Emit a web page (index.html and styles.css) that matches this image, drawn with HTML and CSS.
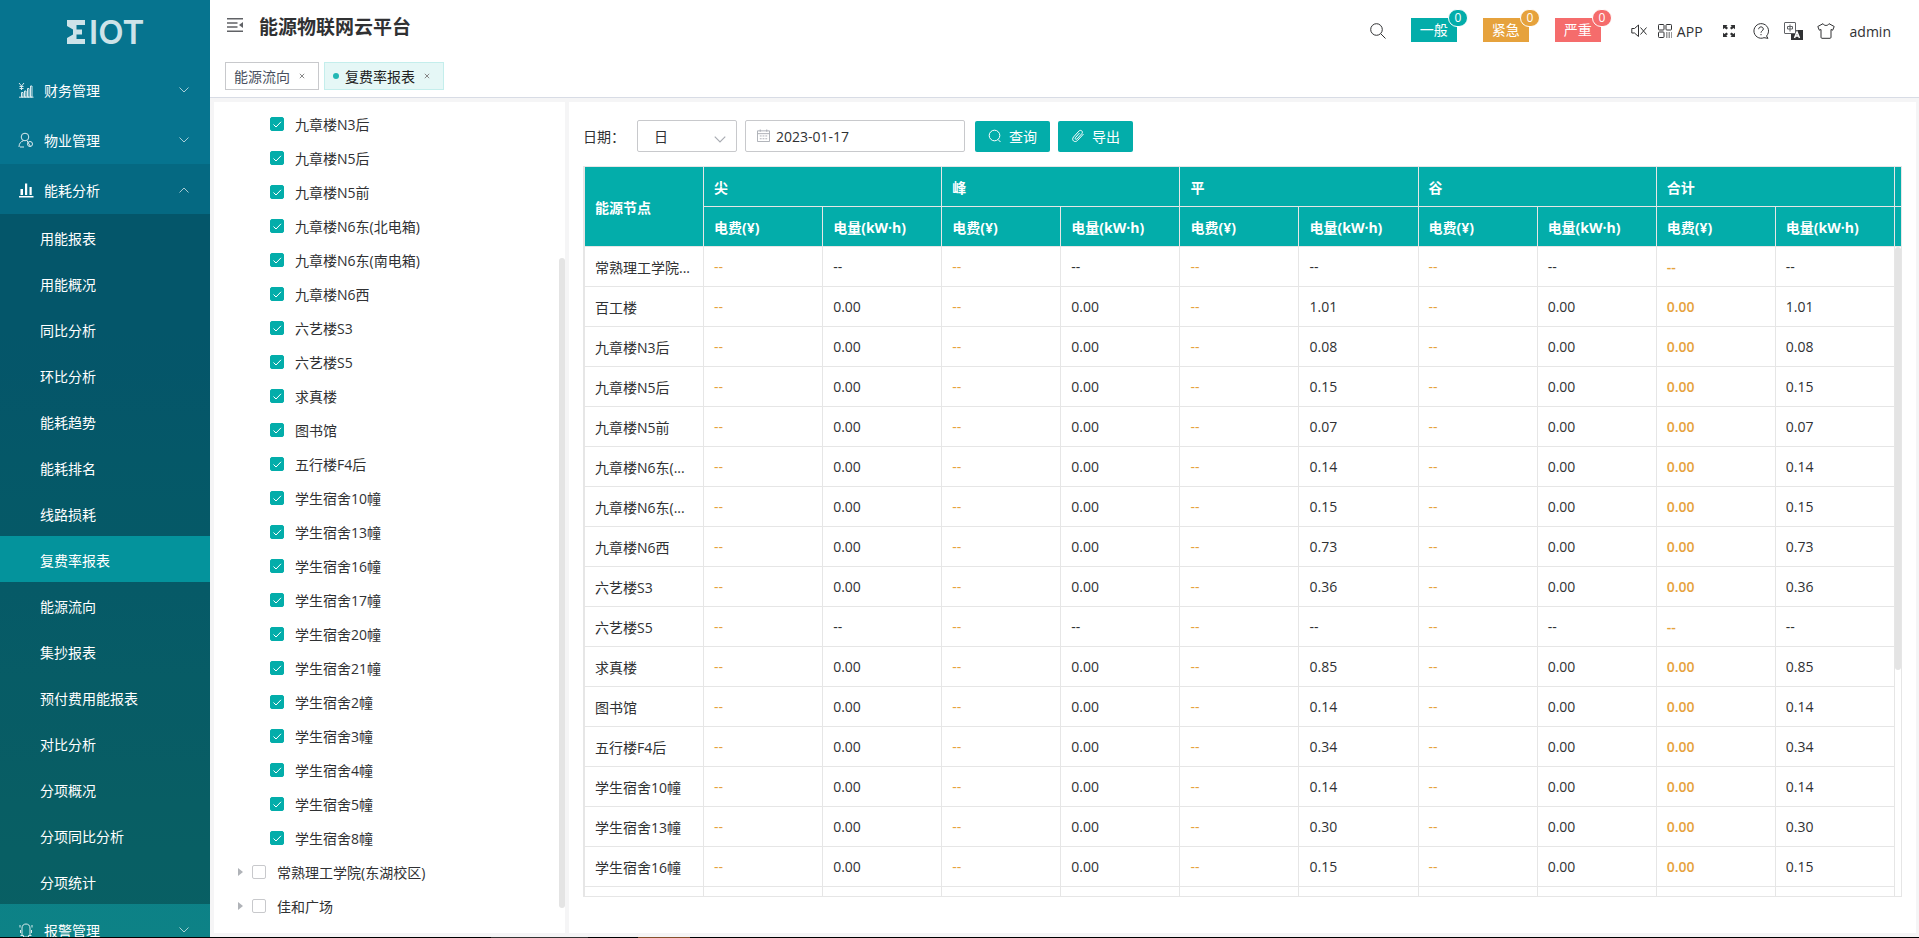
FILE: index.html
```html
<!DOCTYPE html>
<html lang="zh-CN">
<head>
<meta charset="utf-8">
<title>能源物联网云平台</title>
<link rel="stylesheet" href="styles.css">
</head>
<body>
<div class="app">
  <nav class="sidebar">
    <div class="logo">
      <svg class="logo-mark" viewBox="0 0 18 24"><path d="M0 0H18V5H9.500V9.500H15V14.500H9.500V19H18V24H0V18L6 14.500V9.500L0 6Z"/></svg>
      <span>IOT</span>
    </div>
    <button class="menu-item">
      <svg class="menu-icon" viewBox="0 0 16 16"><path d="M1 1l2.500 3L6 1M3.500 4v4M1.500 4.500h4M1.500 6.500h4M1 15.200h14.500M3.500 10.500h1.500V15H3.500zM6.500 9H8v6H6.500zM9.500 6.500H11V15H9.500zM12.500 4H14v11h-1.500z"/></svg>
      <span>财务管理</span>
      <svg class="menu-arrow" viewBox="0 0 10 6"><path d="M.5.5L5 5 9.500.5"/></svg>
    </button>
    <button class="menu-item">
      <svg class="menu-icon" viewBox="0 0 16 16"><circle cx="7" cy="5" r="3.800"/><path d="M1 15c0-3.500 1.800-5.500 4.500-6.300M2 15h4M9 8.700l3.500 5.800"/><circle cx="12" cy="12" r="2.500"/></svg>
      <span>物业管理</span>
      <svg class="menu-arrow" viewBox="0 0 10 6"><path d="M.5.5L5 5 9.500.5"/></svg>
    </button>
    <button class="menu-item is-open">
      <svg class="menu-icon is-solid" viewBox="0 0 16 16"><path d="M1 14h14.500v1.500H1zM2.500 7H5v6H2.500zM7 1.500h2.200V13H7zM11.500 5h2.200v8h-2.200z"/></svg>
      <span>能耗分析</span>
      <svg class="menu-arrow" viewBox="0 0 10 6"><path d="M.5 5.500L5 1l4.500 4.500"/></svg>
    </button>
    <div class="submenu" id="submenu"></div>
    <button class="menu-item">
      <svg class="menu-icon" viewBox="0 0 16 16"><path d="M4 13V6c0-2.500 1.700-4 4-4s4 1.500 4 4v7M2.500 13.500h3v1.500h5v-1.500h3M2 3v2.500M14 3v2.500M2.500 8v3M13.500 8v3"/></svg>
      <span>报警管理</span>
      <svg class="menu-arrow" viewBox="0 0 10 6"><path d="M.5.5L5 5 9.500.5"/></svg>
    </button>
  </nav>

  <div class="main">
    <header class="header">
      <div class="topbar">
        <div class="brand">
          <svg class="fold" viewBox="0 0 16 14"><path d="M0 .8h16M0 5h10.500M0 9h10.500M0 13.200h16"/><path class="fill" d="M16 4v6l-4-3z"/></svg>
          <h1>能源物联网云平台</h1>
        </div>
        <div class="tools">
          <svg class="i-search" viewBox="0 0 16 16"><circle cx="6.500" cy="6.500" r="5.800"/><path d="M10.800 10.800l4.700 4.700"/></svg>
          <div class="alarms">
            <button class="alarm normal">一般<span class="count">0</span></button>
            <button class="alarm urgent">紧急<span class="count">0</span></button>
            <button class="alarm severe">严重<span class="count">0</span></button>
          </div>
          <div class="shortcuts">
            <svg class="i-16" viewBox="0 0 16 16"><path d="M.8 5.500h2.700L7.500 2v11.500L3.500 10H.8zM9.500 4.500l6 7M15.500 4.500l-6 7"/></svg>
            <a class="app-link" href="#"><svg class="i-14" viewBox="0 0 14 14"><rect x=".5" y=".5" width="5.500" height="5.500" rx=".8"/><rect x="8" y=".5" width="5.500" height="5.500" rx=".8"/><rect x=".5" y="8" width="5.500" height="5.500" rx=".8"/><path d="M8 9h1.500M10.500 9H12M13 9h1M8 11h1.500M10.500 11H12M13 11h1M8 13h1.500M10.500 13H12M13 13h1"/></svg>APP</a>
          </div>
          <svg class="i-full" viewBox="0 0 12 12"><path d="M0 0h4.500L3.300 1.200 5 3 3.500 4.500 1.500 3 0 4.300zM12 0v4.300L10.500 3l-2 1.500L7 3l1.700-1.800L7.500 0zM0 12V7.700L1.500 9l2-1.500L5 9l-1.700 1.800L4.500 12zM12 12H7.500l1.200-1.200L7 9l1.500-1.500 2 1.500L12 7.700z"/></svg>
          <svg class="i-help" viewBox="0 0 16 16"><path d="M13.500 13A7.300 7.300 0 1 0 11 14.700l4 .6zM5.700 6.200c0-1.500 1-2.300 2.300-2.300s2.300.8 2.300 2.100C10.300 7.800 8 7.800 8 9.700M8 11v1.200"/></svg>
          <svg class="i-lang" viewBox="0 0 19 18"><path class="block" d="M7 8h12v10H7z"/><rect class="line" x=".5" y=".5" width="11" height="11" rx=".5"/><path class="line thin" d="M3.500 4.500h5v2.500h-5zM6 2.500V9.500"/><path class="mark" d="M10.500 16L13 10l2.500 6M11.500 14h3"/></svg>
          <svg class="i-shirt" viewBox="0 0 18 16"><path d="M6 .7L.8 3.500 2.300 7.200 4 6.500v7.800c0 .6.400 1 1 1h8c.6 0 1-.4 1-1V6.500l1.700.7 1.500-3.700L12 .7C11 3 7 3 6 .7z"/></svg>
          <a class="user" href="#">admin</a>
        </div>
      </div>
      <div class="tabs">
        <a class="tab" href="#"><span>能源流向</span><svg viewBox="0 0 6 6"><path d="M.8.8l4.400 4.400M5.200.8L.8 5.200"/></svg></a>
        <a class="tab is-active" href="#"><i class="dot"></i><span>复费率报表</span><svg viewBox="0 0 6 6"><path d="M.8.8l4.400 4.400M5.200.8L.8 5.200"/></svg></a>
      </div>
    </header>

    <div class="content">
      <aside class="tree">
        <div id="tree"></div>
        <div class="tree-bar"></div>
      </aside>
      <section class="report">
        <form class="filters">
          <label for="period">日期：</label>
          <div class="select-box">
            <select id="period"><option>日</option></select>
            <svg viewBox="0 0 10 6"><path d="M.5.5L5 5 9.500.5"/></svg>
          </div>
          <div class="date-box">
            <svg viewBox="0 0 14 14"><path d="M.5 2h13v11.500H.5zM.5 5h13M3.500.5V3M10.500.5V3M3 7.500h2M6 7.500h2M9 7.500h2M3 10.500h2M6 10.500h2M9 10.500h2"/></svg>
            <input type="text" aria-label="选择日期" value="2023-01-17">
          </div>
          <button class="btn" type="button"><svg viewBox="0 0 14 14"><circle cx="6.500" cy="6.500" r="5.300"/><path d="M10 10.500l2.500 2.500"/></svg>查询</button>
          <button class="btn" type="button"><svg viewBox="0 0 14 14"><path d="M8.500 4L4.500 8.500c-1 1.300.5 2.500 1.600 1.400l4.700-5.200c1.800-2.200-1-4.500-2.900-2.600L2.500 8c-2.500 3 1.200 6.300 4 3.500l6-6.500"/></svg>导出</button>
        </form>
        <div class="table-wrap">
          <table>
            <colgroup><col span="11"><col class="gutter"></colgroup>
            <thead>
              <tr><th rowspan="2">能源节点</th><th colspan="2">尖</th><th colspan="2">峰</th><th colspan="2">平</th><th colspan="2">谷</th><th colspan="2">合计</th><th></th></tr>
              <tr id="units"></tr>
            </thead>
            <tbody id="rows"></tbody>
          </table>
          <div class="table-bar"></div>
        </div>
      </section>
    </div>
  </div>
</div>
<div class="edge"></div>
<script src="app.js"></script>
</body>
</html>
```

FILE: styles.css
```css
* { box-sizing: border-box; }

body {
  margin: 0;
  height: 100vh;
  display: flex;
  flex-direction: column;
  overflow: hidden;
  font-family: "Open Sans", "Noto Sans CJK SC", sans-serif;
  font-size: 14px;
  color: #303133;
  background: #fff;
}

button, input, select { font: inherit; color: inherit; }
a { color: inherit; text-decoration: none; }
svg { flex: none; fill: none; stroke: currentColor; }

.app { flex: 1; min-height: 0; display: flex; }
.edge { height: 1px; background: linear-gradient(90deg, #000 491px, #333 491px, #333 588px, #000 588px, #000 638px, #84512c 638px, #84512c 690px, #000 690px); }

/* Sidebar */
.sidebar {
  width: 210px;
  flex: none;
  overflow: hidden;
  color: #fff;
  background: linear-gradient(180deg, #06748f 0%, #06748f 35%, #0d8286 100%);
}
.logo {
  height: 64px;
  padding-left: 67px;
  display: flex;
  align-items: center;
  gap: 4px;
  color: #cde3e9;
  font: 600 33px/64px Inter, sans-serif;
}
.logo-mark { width: 18px; height: 24px; fill: currentColor; stroke: none; }
.menu-item {
  width: 100%;
  height: 50px;
  padding: 2px 21px 0 18px;
  display: flex;
  align-items: center;
  gap: 10px;
  border: 0;
  background: none;
  text-align: left;
}
.menu-item span { flex: 1; }
.menu-item.is-open { background: rgba(0, 0, 0, .09); }
.menu-icon { width: 16px; height: 16px; opacity: .85; }
.menu-icon.is-solid { fill: currentColor; stroke: none; opacity: 1; }
.menu-arrow { width: 10px; height: 6px; opacity: .65; }
.submenu { background: rgba(0, 0, 0, .26); }
.submenu a { display: block; height: 46px; padding-left: 40px; line-height: 50px; }
.submenu a.is-active { background: #04939c; }

/* Header */
.main { flex: 1; min-width: 0; display: flex; flex-direction: column; background: #f5f5f6; }
.header { height: 98px; flex: none; background: #fff; border-bottom: 1px solid #d8dce5; }
.topbar { height: 62px; display: flex; justify-content: space-between; }
.brand { height: 54px; padding-left: 17px; display: flex; align-items: center; gap: 16px; }
.brand h1 { margin: 0; font-size: 19px; font-weight: 600; line-height: 28px; }
.fold { width: 16px; height: 14px; margin-bottom: 4px; stroke: #606266; stroke-width: 1.500px; }
.fold .fill { fill: #606266; stroke: none; }
.tools { padding-right: 28px; display: flex; align-items: center; }
.i-search { width: 16px; height: 16px; margin-right: 25px; }
.alarms { display: flex; gap: 26px; margin-right: 30px; padding-bottom: 2px; }
.alarm { position: relative; width: 46px; height: 24px; padding: 0; border: 0; color: #fff; line-height: 24px; }
.alarm.normal, .normal .count { background: #03adaa; }
.alarm.urgent, .urgent .count { background: #e6a23c; }
.alarm.severe, .severe .count { background: #f56c6c; }
.count {
  position: absolute;
  top: -9px;
  right: -11px;
  width: 20px;
  height: 18px;
  border: 1px solid #fff;
  border-radius: 9px;
  font-size: 12px;
  line-height: 15px;
}
.shortcuts { display: flex; align-items: center; gap: 11px; margin-right: 20px; }
.app-link { display: flex; align-items: center; gap: 5px; }
.i-16 { width: 16px; height: 16px; }
.i-14 { width: 14px; height: 14px; }
.i-full { width: 12px; height: 12px; margin-right: 18px; fill: currentColor; stroke: none; }
.i-help { width: 16px; height: 16px; margin-right: 15px; }
.i-lang { width: 19px; height: 18px; margin-right: 14px; }
.i-lang .line { fill: #fff; stroke: #606266; }
.i-lang .thin { fill: none; }
.i-lang .block { fill: #303133; stroke: none; }
.i-lang .mark { stroke: #fff; stroke-width: 1.500px; }
.i-shirt { width: 18px; height: 16px; margin-right: 15px; }

.tabs { display: flex; gap: 5px; padding-left: 15px; }
.tab {
  height: 28px;
  padding: 0 13px 0 8px;
  display: flex;
  align-items: center;
  border: 1px solid #c8c9cc;
  color: #495060;
}
.tab span { margin-right: 9px; }
.tab svg { width: 6px; height: 6px; stroke: #888; }
.tab.is-active { background: #e5f7f6; border-color: #c4eeec; color: #222; }
.dot { width: 6px; height: 6px; margin-right: 6px; border-radius: 50%; background: #23b7b4; }

/* Content */
.content { flex: 1; min-height: 0; display: flex; gap: 4px; padding: 4px 3px 4px 4px; }
.tree { position: relative; width: 351px; flex: none; overflow: hidden; padding-top: 5px; background: #fff; }
.node { height: 34px; padding-left: 24px; display: flex; align-items: center; }
.node.leaf { padding-left: 56px; }
.node input {
  appearance: none;
  width: 14px;
  height: 14px;
  margin: 0 11px 0 0;
  border: 1px solid #c8c9cc;
  border-radius: 2px;
  background: #fff;
}
.node .check { position: relative; display: flex; }
.node .check svg { position: absolute; left: 3px; top: 4px; width: 9px; height: 7px; stroke: #fff; }
.node input:checked { background: #03adaa; border-color: #03adaa; }
.caret { width: 5px; height: 8px; margin-right: 9px; fill: #b0b3b8; stroke: none; }
.tree-bar { position: absolute; right: 0; top: 18.800%; bottom: 3%; width: 6px; border-radius: 3px; background: #e4e4e4; }

.report {
  flex: 1;
  min-width: 0;
  display: flex;
  flex-direction: column;
  padding: 18px 14px 36px;
  background: #fff;
}
.filters { display: flex; align-items: center; height: 32px; margin-bottom: 14px; }
.filters label { width: 54px; white-space: nowrap; font-family: "Open Sans", "Noto Sans CJK TC", sans-serif; }
.select-box, .date-box { position: relative; height: 32px; margin-right: 8px; }
.select-box { width: 100px; }
.date-box { width: 220px; margin-right: 10px; }
.select-box select, .date-box input {
  appearance: none;
  width: 100%;
  height: 32px;
  padding: 0 16px;
  border: 1px solid #c8c9cc;
  border-radius: 2px;
  background: #fff;
}
.date-box input { padding-left: 30px; }
.select-box svg { position: absolute; right: 11px; top: 16px; width: 12px; height: 7px; stroke: #a8abb2; }
.date-box svg { position: absolute; left: 12px; top: 9px; width: 13px; height: 13px; stroke: #a8abb2; }
.btn {
  height: 31px;
  width: 75px;
  margin-right: 8px;
  padding: 0;
  display: flex;
  align-items: center;
  justify-content: center;
  gap: 7px;
  border: 0;
  border-radius: 2px;
  color: #fff;
  background: #03adaa;
}
.btn svg { width: 14px; height: 14px; }

.table-wrap { position: relative; flex: 1; min-height: 0; overflow: hidden; border: 1px solid #e6e6e6; border-left-width: 2px; }
table { width: 100%; table-layout: fixed; border-collapse: separate; border-spacing: 0; }
.gutter { width: 6px; }
th, td {
  height: 40px;
  padding: 0 10px;
  border-right: 1px solid #e6e6e6;
  border-bottom: 1px solid #e6e6e6;
  text-align: left;
  white-space: nowrap;
  overflow: hidden;
  text-overflow: ellipsis;
}
th { color: #fff; background: #03adaa; font-weight: 700; }
th:last-child:empty { padding: 0; border-right: 0; }
td.fee { color: #e6a23c; }
td.total { font-weight: 600; }
.table-bar { position: absolute; right: 0; top: 80px; width: 6px; height: 58%; border-radius: 3px; background: #e4e4e4; }
```

FILE: app.js
```js
const menu = ['用能报表', '用能概况', '同比分析', '环比分析', '能耗趋势', '能耗排名', '线路损耗', '复费率报表',
  '能源流向', '集抄报表', '预付费用能报表', '对比分析', '分项概况', '分项同比分析', '分项统计'];
document.getElementById('submenu').innerHTML = menu
  .map(m => `<a href="#"${m === '复费率报表' ? ' class="is-active"' : ''}>${m}</a>`).join('');

const leaves = ['九章楼N3后', '九章楼N5后', '九章楼N5前', '九章楼N6东(北电箱)', '九章楼N6东(南电箱)', '九章楼N6西',
  '六艺楼S3', '六艺楼S5', '求真楼', '图书馆', '五行楼F4后', '学生宿舍10幢', '学生宿舍13幢', '学生宿舍16幢',
  '学生宿舍17幢', '学生宿舍20幢', '学生宿舍21幢', '学生宿舍2幢', '学生宿舍3幢', '学生宿舍4幢', '学生宿舍5幢', '学生宿舍8幢'];
const tick = '<svg viewBox="0 0 9 7"><path d="M.5 3.500L3 6 8 .8"/></svg>';
const caret = '<svg class="caret" viewBox="0 0 5 8"><path d="M0 0l5 4-5 4z"/></svg>';
document.getElementById('tree').innerHTML =
  leaves.map(n => `<label class="node leaf"><span class="check"><input type="checkbox" checked>${tick}</span>${n}</label>`).join('') +
  ['常熟理工学院(东湖校区)', '佳和广场'].map(n => `<label class="node">${caret}<input type="checkbox">${n}</label>`).join('');

document.getElementById('units').innerHTML = '<th>电费(¥)</th><th>电量(kW·h)</th>'.repeat(5) + '<th></th>';

const rows = [['常熟理工学院...', null], ['百工楼', '1.01'], ['九章楼N3后', '0.08'], ['九章楼N5后', '0.15'],
  ['九章楼N5前', '0.07'], ['九章楼N6东(...', '0.14'], ['九章楼N6东(...', '0.15'], ['九章楼N6西', '0.73'],
  ['六艺楼S3', '0.36'], ['六艺楼S5', null], ['求真楼', '0.85'], ['图书馆', '0.14'], ['五行楼F4后', '0.34'],
  ['学生宿舍10幢', '0.14'], ['学生宿舍13幢', '0.30'], ['学生宿舍16幢', '0.15']];
const pair = (fee, kwh, cls = '') => `<td class="fee${cls}">${fee}</td><td>${kwh}</td>`;
document.getElementById('rows').innerHTML = rows.map(([name, kwh]) => {
  const zero = kwh ? '0.00' : '--';
  const used = kwh || '--';
  return `<tr><td>${name}</td>${pair('--', zero)}${pair('--', zero)}${pair('--', used)}${pair('--', zero)}${pair(zero, used, ' total')}</tr>`;
}).join('') + `<tr>${'<td></td>'.repeat(11)}</tr>`;
```
